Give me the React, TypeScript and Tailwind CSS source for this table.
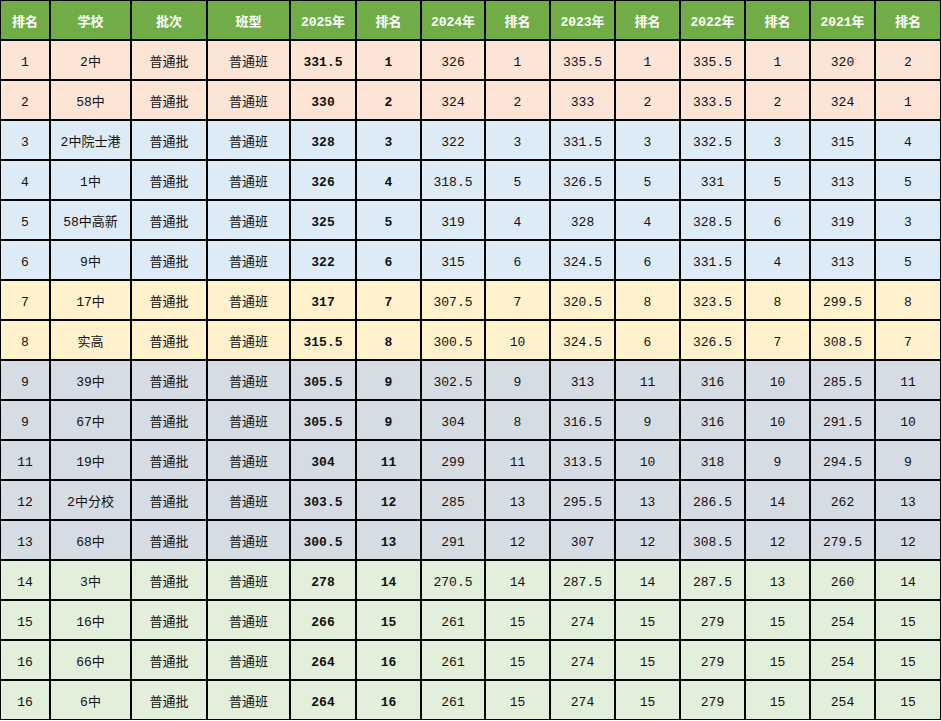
import React from "react";

type Row = { c: string; v: (string | number)[] };

const rows: Row[] = [
  { c: "bg-[#fce4d6]", v: [1, "2中", 331.5, 1, 326, 1, 335.5, 1, 335.5, 1, 320, 2] },
  { c: "bg-[#fce4d6]", v: [2, "58中", 330, 2, 324, 2, 333, 2, 333.5, 2, 324, 1] },
  { c: "bg-[#ddebf7]", v: [3, "2中院士港", 328, 3, 322, 3, 331.5, 3, 332.5, 3, 315, 4] },
  { c: "bg-[#ddebf7]", v: [4, "1中", 326, 4, 318.5, 5, 326.5, 5, 331, 5, 313, 5] },
  { c: "bg-[#ddebf7]", v: [5, "58中高新", 325, 5, 319, 4, 328, 4, 328.5, 6, 319, 3] },
  { c: "bg-[#ddebf7]", v: [6, "9中", 322, 6, 315, 6, 324.5, 6, 331.5, 4, 313, 5] },
  { c: "bg-[#fff2cc]", v: [7, "17中", 317, 7, 307.5, 7, 320.5, 8, 323.5, 8, 299.5, 8] },
  { c: "bg-[#fff2cc]", v: [8, "实高", 315.5, 8, 300.5, 10, 324.5, 6, 326.5, 7, 308.5, 7] },
  { c: "bg-[#d6dce4]", v: [9, "39中", 305.5, 9, 302.5, 9, 313, 11, 316, 10, 285.5, 11] },
  { c: "bg-[#d6dce4]", v: [9, "67中", 305.5, 9, 304, 8, 316.5, 9, 316, 10, 291.5, 10] },
  { c: "bg-[#d6dce4]", v: [11, "19中", 304, 11, 299, 11, 313.5, 10, 318, 9, 294.5, 9] },
  { c: "bg-[#d6dce4]", v: [12, "2中分校", 303.5, 12, 285, 13, 295.5, 13, 286.5, 14, 262, 13] },
  { c: "bg-[#d6dce4]", v: [13, "68中", 300.5, 13, 291, 12, 307, 12, 308.5, 12, 279.5, 12] },
  { c: "bg-[#e2efda]", v: [14, "3中", 278, 14, 270.5, 14, 287.5, 14, 287.5, 13, 260, 14] },
  { c: "bg-[#e2efda]", v: [15, "16中", 266, 15, 261, 15, 274, 15, 279, 15, 254, 15] },
  { c: "bg-[#e2efda]", v: [16, "66中", 264, 16, 261, 15, 274, 15, 279, 15, 254, 15] },
  { c: "bg-[#e2efda]", v: [16, "6中", 264, 16, 261, 15, 274, 15, 279, 15, 254, 15] },
];

const headers = ["排名", "学校", "批次", "班型", "2025年", "排名", "2024年", "排名", "2023年", "排名", "2022年", "排名", "2021年", "排名"];

export default function App() {
  return (
    <div className="w-[941px] h-[721px] bg-white">
      <div className="inline-grid grid-cols-[48px_79px_74px_81px_64px_63px_62px_63px_63px_63px_63px_63px_63px_64px] auto-rows-[38px] gap-[2px] p-px bg-black font-['Liberation_Mono','Noto_Sans_CJK_SC',monospace] text-[13px] text-[#111]">
        {headers.map((h, i) => (
          <div key={"h" + i} className="bg-[#70ad47] text-white font-bold flex items-center justify-center pt-[6px] font-['Liberation_Mono','Noto_Sans_CJK_SC',sans-serif]">
            {h}
          </div>
        ))}
        {rows.map((r, ri) => {
          const cells = [r.v[0], r.v[1], "普通批", "普通班", ...r.v.slice(2)];
          return cells.map((v, ci) => (
            <div
              key={ri + "-" + ci}
              className={`${r.c} flex items-center justify-center pt-[6px] ${ci === 4 || ci === 5 ? "font-bold" : "font-normal"}`}
            >
              {typeof v === "number" ? String(v) : v}
            </div>
          ));
        })}
      </div>
    </div>
  );
}
